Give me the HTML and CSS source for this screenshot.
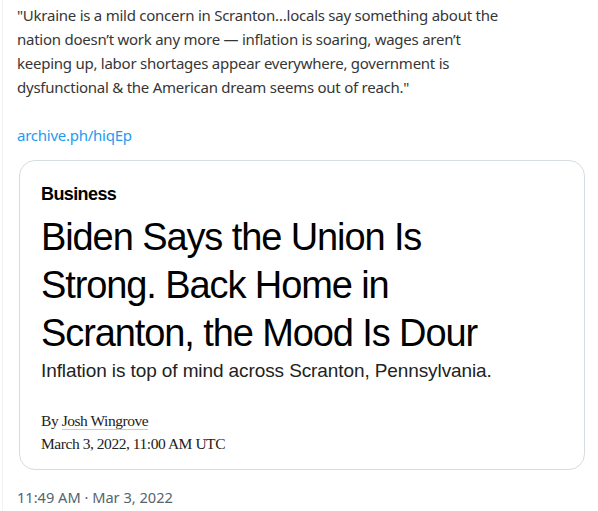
FILE: index.html
```html
<!DOCTYPE html>
<html>
<head>
  <title>Tweet</title>
  <link rel="stylesheet" href="styles.css">
</head>
<body>
  <div class="tweet">
    <div class="tweet-text">
      <p>"Ukraine is a mild concern in Scranton…locals say something about the<br>
      nation doesn’t work any more — inflation is soaring, wages aren’t<br>
      keeping up, labor shortages appear everywhere, government is<br>
      dysfunctional &amp; the American dream seems out of reach."</p>
      <p><a href="#" class="link">archive.ph/hiqEp</a></p>
    </div>

    <div class="card">
      <div class="section">Business</div>
      <h1 class="headline">Biden Says the Union Is Strong. Back Home in Scranton, the Mood Is Dour</h1>
      <div class="dek">Inflation is top of mind across Scranton, Pennsylvania.</div>
      <div class="byline">By <span class="author">Josh Wingrove</span></div>
      <div class="dateline">March 3, 2022, 11:00 AM UTC</div>
    </div>

    <div class="timestamp">11:49 AM · Mar 3, 2022</div>
  </div>
</body>
</html>
```

FILE: styles.css
```css
body {
  margin: 0;
  background: #fff;
  font-family: "Noto Sans", sans-serif;
}

.tweet {
  margin-left: 2px;
  border-left: 1px solid #eff3f4;
  padding: 3px 13px 4px 14px;
}

.tweet-text {
  font-size: 15px;
  line-height: 24px;
  letter-spacing: -0.25px;
  color: #363636;
  white-space: nowrap;
}

.tweet-text p {
  margin: 0 0 24px 0;
}

.tweet-text p:last-child {
  margin-bottom: 0;
}

.link {
  color: #1d9bf0;
  text-decoration: none;
}

.card {
  margin: 13px 0 0 2px;
  border: 1px solid #d6dde1;
  border-radius: 16px;
  padding: 22px 21px 0 21px;
  height: 286px;
  font-family: "Liberation Sans", Arial, sans-serif;
  color: #000;
}

.section {
  font-weight: bold;
  font-size: 18px;
  line-height: 22px;
  letter-spacing: -0.6px;
}

.headline {
  margin: 8px 0 0 0;
  font-weight: normal;
  font-size: 38px;
  line-height: 48px;
  letter-spacing: -1.1px;
  width: 460px;
}

.dek {
  margin-top: 1px;
  font-size: 19px;
  line-height: 26px;
  letter-spacing: -0.1px;
  color: #222;
}

.byline,
.dateline {
  font-family: "Liberation Serif", "Times New Roman", serif;
  font-size: 15.5px;
  line-height: 23px;
  letter-spacing: -0.45px;
  color: #222;
}

.byline {
  margin-top: 25px;
}

.author {
  border-bottom: 1px solid #ccc;
}

.timestamp {
  margin-top: 17px;
  font-size: 14.6px;
  line-height: 20px;
  color: #536471;
}
```
